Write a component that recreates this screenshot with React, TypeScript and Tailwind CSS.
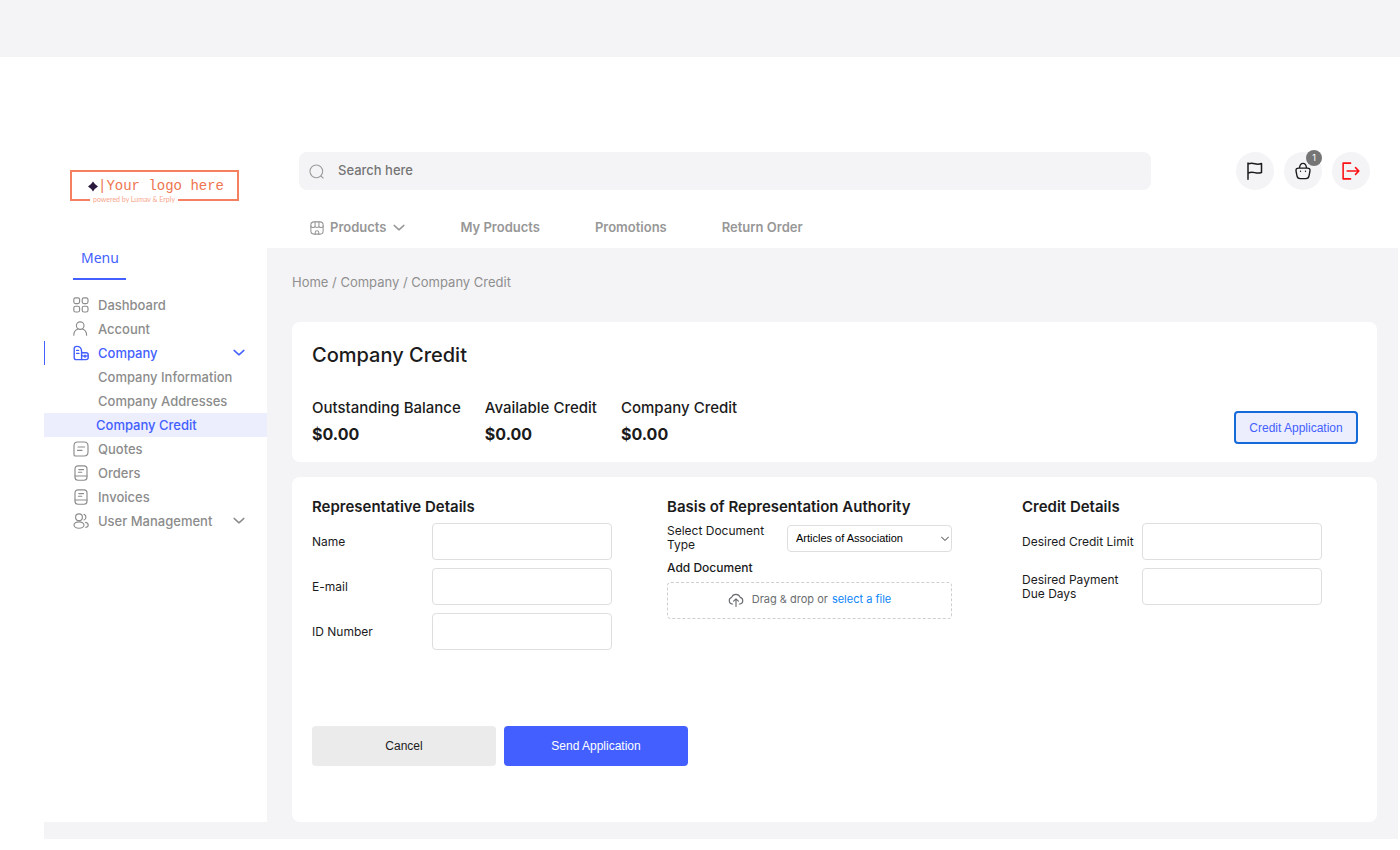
import type { ReactNode } from 'react';

function Svg({ children, size = 16, className = '', stroke = 1.15 }: { children: ReactNode; size?: number; className?: string; stroke?: number }) {
  return (
    <svg
      width={size}
      height={size}
      viewBox="0 0 16 16"
      fill="none"
      stroke="currentColor"
      strokeWidth={stroke}
      strokeLinecap="round"
      strokeLinejoin="round"
      aria-hidden="true"
      className={`shrink-0 ${className}`}
    >
      {children}
    </svg>
  );
}

const Chevron = () => (
  <Svg size={12} stroke={1.9}>
    <path d="M1.500 4.500L8 10.500L14.500 4.500" />
  </Svg>
);

const gridIcon = (
  <Svg>
    <rect x="0.8" y="0.8" width="5.800" height="5.800" rx="1.800" />
    <rect x="9.2" y="0.8" width="5.800" height="5.800" rx="1.800" />
    <rect x="0.8" y="9.2" width="5.800" height="5.800" rx="1.800" />
    <rect x="9.2" y="9.2" width="5.800" height="5.800" rx="1.800" />
  </Svg>
);

const userIcon = (
  <Svg>
    <circle cx="7.200" cy="4.600" r="3.800" />
    <path d="M0.800 14.200C0.800 11 2.600 8.800 5 8M9.400 8C11.800 8.800 13.600 11 13.600 14.200" />
  </Svg>
);

const companyIcon = (
  <Svg stroke={1.4}>
    <path d="M8.600 14.600H3.400Q1.200 14.600 1.200 12.400V3.800Q1.200 1.400 3.600 1.400Q8.600 1.400 8.600 6.400z" />
    <path d="M3.600 5.400H5.600M3.600 8.400H6" />
    <path d="M8.600 7.800H13Q15.200 7.800 15.200 9.800V12.600Q15.200 14.600 13 14.600H8.600M8.600 10.600L12 11.400L15.200 10.600M12 10.200V12.200" />
  </Svg>
);

const quoteIcon = (
  <Svg>
    <path d="M4.800 1H11Q15 1 15 5V11Q15 15 11 15H2.500Q1 15 1 13.500V4.800Q1 1 4.800 1z" />
    <path d="M5 6H11.500M4.500 9.400H9" />
  </Svg>
);

const documentIcon = (
  <Svg>
    <rect x="2" y="0.8" width="12" height="14.400" rx="3" />
    <path d="M2 11H14M5.800 4.600H10.600M5.400 7.200H8.800" />
  </Svg>
);

const usersIcon = (
  <Svg>
    <circle cx="6" cy="4.200" r="3.400" />
    <ellipse cx="6" cy="12" rx="5" ry="3.200" />
    <path d="M11 1.400A3 3 0 0 1 11 7M12.600 9.400Q15.200 10 15.200 12T12.800 14.400" />
  </Svg>
);

type Item = { label: string; icon?: ReactNode; open?: boolean; arrow?: boolean; current?: boolean };

const items: Item[] = [
  { label: 'Dashboard', icon: gridIcon },
  { label: 'Account', icon: userIcon },
  { label: 'Company', icon: companyIcon, open: true, arrow: true },
  { label: 'Company Information' },
  { label: 'Company Addresses' },
  { label: 'Company Credit', current: true },
  { label: 'Quotes', icon: quoteIcon },
  { label: 'Orders', icon: documentIcon },
  { label: 'Invoices', icon: documentIcon },
  { label: 'User Management', icon: usersIcon, arrow: true },
];

function MenuRow({ label, icon, open, arrow, current }: Item) {
  let tone = 'border-transparent text-[#8c8c8c]';
  if (open) tone = 'border-[#435fff] text-[#435fff]';
  if (current) tone = 'border-[#eceefe] bg-[#eceefe] text-[#435fff]';
  return (
    <li>
      <a href="#" className={`flex h-6 items-center border-l pr-[22px] text-[13px] font-medium ${icon ? 'pl-7' : current ? 'pl-[51px]' : 'pl-[53px]'} ${tone}`}>
        {icon}
        <span className={`grow pt-0.5 ${icon ? 'ml-[9px]' : ''}`}>{label}</span>
        {arrow && <Chevron />}
      </a>
    </li>
  );
}

function Logo() {
  return (
    <a href="#" className="relative ml-[26px] flex h-[31px] w-[169px] items-center border-2 border-[#f4805f] pt-0.5 pl-4 text-[#ee7550]">
      <svg width="10" height="11" viewBox="0 0 11 11" aria-hidden="true">
        <path d="M5.500 0Q7.500 3.500 11 5.500Q7.500 7.500 5.500 11Q3.500 7.500 0 5.500Q3.500 3.500 5.500 0z" fill="#2b1a3d" />
      </svg>
      <span className="whitespace-nowrap font-['Liberation_Mono',monospace] text-[14px]">|Your logo here</span>
      <small className="absolute -bottom-1 left-[18px] whitespace-nowrap bg-white px-[3px] font-[Lato,sans-serif] text-[7px] leading-[8px] text-[#f9a58c]">
        powered by Lumav &amp; Erply
      </small>
    </a>
  );
}

function Field({ id, label }: { id: string; label: string }) {
  return (
    <div className="flex h-[37px] items-center">
      <label htmlFor={id} className="w-[120px] shrink-0 pr-2 text-xs leading-[14px]">{label}</label>
      <input id={id} type="text" className="h-full w-[180px] rounded border border-[#dedede] bg-white px-2 text-xs" />
    </div>
  );
}

function Figure({ label, value }: { label: string; value: string }) {
  return (
    <div>
      <dt className="text-[15px] leading-[26px] font-medium">{label}</dt>
      <dd className="text-base leading-[26px] font-bold">{value}</dd>
    </div>
  );
}

const round = 'relative flex size-[38px] items-center justify-center rounded-full bg-[#f4f4f6]';

export default function App() {
  return (
    <div className="bg-white font-[Inter,sans-serif] text-[#1b1b1c]">
      <div className="h-[57px] bg-[#f4f4f6]" />
      <div className="mr-0.5 ml-11 flex bg-[#f4f4f6]">
        <aside className="mb-[17px] w-[223px] shrink-0 bg-white pt-[113px]">
          <Logo />
          <h2 className="mt-[45px] ml-[29px] w-[53px] border-b-2 border-[#435fff] pl-2 font-['Noto_Sans',sans-serif] text-sm leading-6 text-[#435fff]">
            <span className="block pb-2">Menu</span>
          </h2>
          <ul className="mt-[13px]">
            {items.map((item) => <MenuRow key={item.label} {...item} />)}
          </ul>
        </aside>

        <div className="flex min-w-0 grow flex-col">
          <header className="bg-white pt-[95px] pr-7 pl-8">
            <div className="flex items-center">
              <div className="flex h-[38px] grow items-center rounded-lg bg-[#f4f4f6] pl-2.5 text-[#9b9b9b]">
                <Svg size={15}>
                  <circle cx="7.800" cy="7.800" r="6.800" />
                  <path d="M12.800 12.800L15 15" />
                </Svg>
                <input type="search" aria-label="Search here" placeholder="Search here" className="ml-3.5 grow bg-transparent text-[13px] font-medium text-[#333] outline-none placeholder:text-[#757575]" />
              </div>
              <div className="ml-[85px] flex gap-2.5">
                <button type="button" aria-label="Flag" className={round}>
                  <Svg size={20} stroke={1.2}>
                    <path d="M2.400 1.500V14.500M2.400 2.400Q5 1.500 7.800 2.200T13.200 2V9.200Q10.600 10.100 7.800 9.300T2.400 9.700" />
                  </Svg>
                </button>
                <button type="button" aria-label="Cart" className={round}>
                  <Svg size={18} stroke={1.2}>
                    <path d="M4.200 5.400H11.800Q14.600 5.400 14.200 8L13.400 12.200Q13 14.800 10.600 14.800H5.400Q3 14.800 2.600 12.200L1.800 8Q1.400 5.400 4.200 5.400zM4.800 5.400Q5.400 1.200 8 1.200T11.200 5.400M5.800 8.200V8.300M10.200 8.200V8.300" />
                  </Svg>
                  <span className="absolute -top-0.5 right-0 flex size-4 items-center justify-center rounded-full bg-[#757575] text-[9px] text-white">1</span>
                </button>
                <button type="button" aria-label="Log out" className={`${round} text-[#fb1014]`}>
                  <Svg size={18} stroke={1.4}>
                    <path d="M7.600 1H1V15H7.600M4.600 8H15M12 5L15 8L12 11" />
                  </Svg>
                </button>
              </div>
            </div>
            <nav className="flex h-[58px] items-center gap-[55px] pt-[18px] pl-[11px] text-[13px] font-semibold text-[#979797]">
              <a href="#" className="flex items-center">
                <Svg size={14} stroke={1.2}>
                  <rect x="1" y="1" width="14" height="14" rx="3.500" />
                  <path d="M5.800 1V6M10.200 1V6M1 5.500Q1 7.500 3.400 7.500T5.800 5.500Q5.800 7.500 8 7.500T10.200 5.500Q10.200 7.500 12.600 7.500T15 5.500M6 15V13Q6 11.200 8 11.200T10 13V15" />
                </Svg>
                <span className="mr-[7px] ml-1.5">Products</span>
                <Chevron />
              </a>
              <a href="#">My Products</a>
              <a href="#">Promotions</a>
              <a href="#">Return Order</a>
            </nav>
          </header>

          <main className="flex grow flex-col pt-6 pr-[21px] pb-[17px] pl-[25px]">
            <nav aria-label="Breadcrumb" className="text-[13px] leading-5 text-[#8f8f8f]">
              <a href="#">Home</a> / <a href="#">Company</a> / <span>Company Credit</span>
            </nav>

            <section className="mt-[30px] flex items-end rounded-lg bg-white pr-[19px] pb-[15px] pl-5">
              <div className="grow pt-5">
                <h1 className="text-xl leading-[26px] font-medium">Company Credit</h1>
                <dl className="mt-[27px] flex gap-6">
                  <Figure label="Outstanding Balance" value="$0.00" />
                  <Figure label="Available Credit" value="$0.00" />
                  <Figure label="Company Credit" value="$0.00" />
                </dl>
              </div>
              <button type="button" className="mb-[3px] h-[33px] w-[124px] rounded border-2 border-[#1569d8] bg-[#eceefe] font-['Liberation_Sans',sans-serif] text-xs text-[#435fff]">
                Credit Application
              </button>
            </section>

            <form className="mt-[15px] grow rounded-lg bg-white pt-5 pb-14 pl-5" onSubmit={(e) => e.preventDefault()}>
              <div className="grid min-h-[229px] grid-cols-3">
                <fieldset>
                  <legend className="mb-1.5 text-[15px] leading-5 font-semibold">Representative Details</legend>
                  <div className="flex flex-col gap-2">
                    <Field id="name" label="Name" />
                    <Field id="email" label="E-mail" />
                    <Field id="id-number" label="ID Number" />
                  </div>
                </fieldset>
                <fieldset>
                  <legend className="mb-1.5 text-[15px] leading-5 font-semibold">Basis of Representation Authority</legend>
                  <div className="flex w-[285px] items-center pt-px">
                    <label htmlFor="doc-type" className="w-[120px] shrink-0 pr-2 text-xs leading-[14px]">Select Document Type</label>
                    <div className="relative grow">
                      <select id="doc-type" className="block h-[27px] w-full appearance-none rounded border border-[#dedede] bg-white pl-2 font-['Liberation_Sans',sans-serif] text-[11px] text-black">
                        <option>Articles of Association</option>
                      </select>
                      <Svg size={8} stroke={2} className="pointer-events-none absolute top-2.5 right-[3px] text-[#333]">
                        <path d="M1 4l7 7 7-7" />
                      </Svg>
                    </div>
                  </div>
                  <h3 className="mt-1.5 text-xs leading-5 font-medium">Add Document</h3>
                  <div className="mt-1 flex h-[37px] w-[285px] items-center justify-center rounded border border-dashed border-[#cfcfcf] pb-0.5 text-[11px] text-[#6a6d70]">
                    <Svg>
                      <path d="M4.600 12H4.200A3.400 3.400 0 0 1 3.600 5.400A4.600 4.600 0 0 1 12.200 5.400A3.400 3.400 0 0 1 12.200 12H11.400M8 14.500V7M5.600 9.200L8 6.800L10.400 9.200" />
                    </Svg>
                    <span className="ml-2">Drag &amp; drop or</span>
                    <button type="button" className="ml-1 text-[#0d86f8]">select a file</button>
                  </div>
                </fieldset>
                <fieldset>
                  <legend className="mb-1.5 text-[15px] leading-5 font-semibold">Credit Details</legend>
                  <div className="flex flex-col gap-2">
                    <Field id="limit" label="Desired Credit Limit" />
                    <Field id="due-days" label="Desired Payment Due Days" />
                  </div>
                </fieldset>
              </div>
              <div className="flex gap-2 font-['Liberation_Sans',sans-serif] text-xs">
                <button type="button" className="h-10 w-[184px] rounded bg-[#ebebeb]">Cancel</button>
                <button type="submit" className="h-10 w-[184px] rounded bg-[#435fff] text-white">Send Application</button>
              </div>
            </form>
          </main>
        </div>
      </div>
    </div>
  );
}
